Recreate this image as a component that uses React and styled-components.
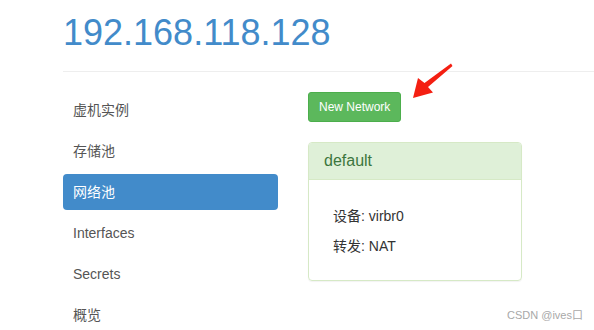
import React from "react";
import styled, { createGlobalStyle } from "styled-components";

const Global = createGlobalStyle`
  html, body { margin: 0; padding: 0; background: #fff; }
  body {
    font-family: "Liberation Sans", Arial, "Noto Sans CJK SC", sans-serif;
    font-size: 14px;
    color: #333;
  }
`;

const Page = styled.div`
  position: relative;
  width: 594px;
  height: 330px;
  overflow: hidden;
  padding-left: 63px;
  box-sizing: border-box;
`;

const Header = styled.h1`
  margin: 0;
  padding: 13px 0 18px 0;
  font-size: 36px;
  line-height: 40px;
  font-weight: 400;
  color: #428bca;
  border-bottom: 1px solid #eee;
`;

const Body = styled.div`
  display: flex;
  margin-top: 20px;
`;

const Nav = styled.ul`
  list-style: none;
  margin: 0;
  padding: 0;
  width: 215px;
  display: flex;
  flex-direction: column;
  gap: 5px;
  flex-shrink: 0;
`;

const NavItem = styled.li`
  height: 36px;
  line-height: 36px;
  padding: 0 10px;
  border-radius: 4px;
  font-size: 14px;
  color: ${(p) => (p.$active ? "#fff" : "#555")};
  background: ${(p) => (p.$active ? "#428bca" : "transparent")};
`;

const Content = styled.div`
  margin-left: 30px;
  display: flex;
  flex-direction: column;
  align-items: flex-start;
`;

const Button = styled.button`
  height: 30px;
  padding: 0 10px;
  font-family: inherit;
  font-size: 12px;
  line-height: 28px;
  color: #fff;
  background: #5cb85c;
  border: 1px solid #4cae4c;
  border-radius: 3px;
`;

const Panel = styled.div`
  margin-top: 20px;
  width: 214px;
  box-sizing: border-box;
  border: 1px solid #d6e9c6;
  border-radius: 4px;
  box-shadow: 0 1px 1px rgba(0, 0, 0, 0.05);
`;

const PanelHeading = styled.div`
  height: 36px;
  line-height: 36px;
  padding: 0 15px;
  font-size: 16px;
  color: #3c763d;
  background: #dff0d8;
  border-bottom: 1px solid #d6e9c6;
  border-radius: 3px 3px 0 0;
`;

const PanelBody = styled.div`
  padding: 26px 24px 24px;
  display: flex;
  flex-direction: column;
  gap: 10px;
`;

const Line = styled.p`
  margin: 0;
  line-height: 20px;
  font-size: 14px;
  color: #333;
`;

const Watermark = styled.div`
  position: absolute;
  left: 507px;
  top: 308px;
  font-size: 11px;
  line-height: 14px;
  color: #a8a8a8;
  white-space: nowrap;
`;

const Arrow = styled.svg`
  position: absolute;
  left: 405px;
  top: 58px;
`;

export default function App() {
  const items = ["虚机实例", "存储池", "网络池", "Interfaces", "Secrets", "概览"];
  return (
    <Page>
      <Global />
      <Header>192.168.118.128</Header>
      <Body>
        <Nav>
          {items.map((t) => (
            <NavItem key={t} $active={t === "网络池"}>
              {t}
            </NavItem>
          ))}
        </Nav>
        <Content>
          <Button>New Network</Button>
          <Panel>
            <PanelHeading>default</PanelHeading>
            <PanelBody>
              <Line>设备: virbr0</Line>
              <Line>转发: NAT</Line>
            </PanelBody>
          </Panel>
        </Content>
      </Body>
      <Arrow width="50" height="45" viewBox="405 58 50 45">
        <polygon
          points="451,63.5 452.5,66 428,87 433,92.5 413,98 418,78 424.5,83"
          fill="#f41f12"
        />
      </Arrow>
      <Watermark>CSDN @ives口</Watermark>
    </Page>
  );
}
